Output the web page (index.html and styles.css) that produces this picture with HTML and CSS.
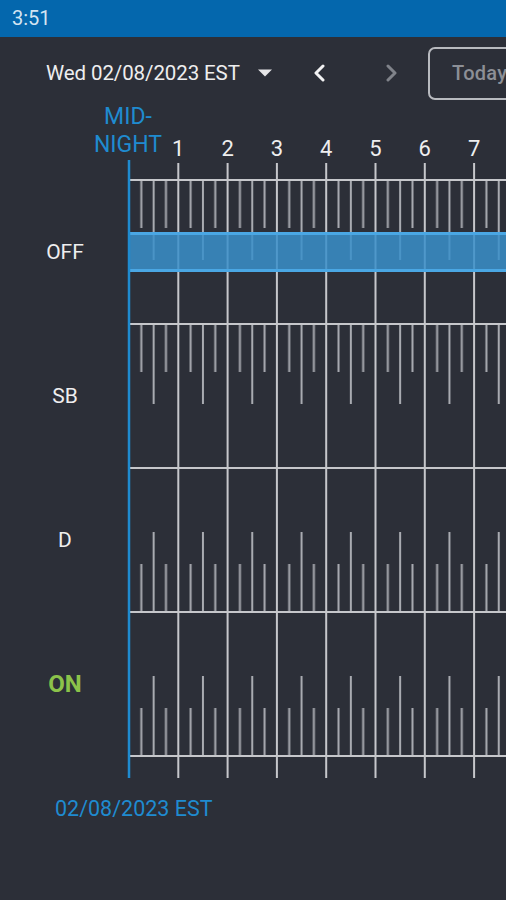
FILE: index.html
```html
<!DOCTYPE html>
<html lang="en">
<head>
  <meta charset="utf-8" />
  <meta name="viewport" content="width=device-width,initial-scale=1" />
  <title>Log – Wed 02/08/2023</title>
  <link rel="stylesheet" href="styles.css">
</head>
<body>
  <!-- status bar -->
  <div class="status">3:51</div>

  <!-- date picker / day navigation -->
  <header class="toolbar">
    <span class="date">Wed 02/08/2023 EST</span>
    <svg class="caret" width="16" height="8" viewBox="0 0 16 8"><path d="M1 0.5h14L8 7.5z"/></svg>
    <button class="nav" aria-label="Previous day">
      <svg width="12" height="18" viewBox="0 0 12 18"><polyline points="10,2 3,9 10,16"/></svg>
    </button>
    <button class="nav is-off" aria-label="Next day" disabled>
      <svg width="12" height="18" viewBox="0 0 12 18"><polyline points="2,2 9,9 2,16"/></svg>
    </button>
    <button class="today">Today</button>
  </header>

  <!-- duty status graph -->
  <section class="chart">
    <svg class="grid" width="506" height="690" viewBox="0 0 506 690">
      <defs>
        <pattern id="ticks-down" patternUnits="userSpaceOnUse" x="129" y="0" width="49.3" height="80">
          <path class="tick" d="M12.33 0v48M24.65 0v80M36.98 0v48"/>
        </pattern>
        <pattern id="ticks-up" patternUnits="userSpaceOnUse" x="129" y="0" width="49.3" height="80">
          <path class="tick" d="M12.33 80v-48M24.65 80v-80M36.98 80v-48"/>
        </pattern>
      </defs>

      <!-- quarter / half hour ticks -->
      <rect x="129" y="80" width="377" height="80" fill="url(#ticks-down)"/>
      <g transform="translate(0 224)"><rect x="129" y="0" width="377" height="80" fill="url(#ticks-down)"/></g>
      <g transform="translate(0 432)"><rect x="129" y="0" width="377" height="80" fill="url(#ticks-up)"/></g>
      <g transform="translate(0 576)"><rect x="129" y="0" width="377" height="80" fill="url(#ticks-up)"/></g>

      <!-- hour lines -->
      <path class="line" d="M178.3 63v615M227.6 63v615M276.9 63v615M326.2 63v615M375.5 63v615M424.8 63v615M474.1 63v615M523.4 63v615"/>

      <!-- row lines -->
      <path class="line" d="M129 80H506M129 224H506M129 368H506M129 512H506M129 656H506"/>

      <!-- OFF duty segment -->
      <rect class="seg" x="129" y="132" width="400" height="40"/>
      <path class="seg-edge" d="M129 133.5H506M129 170.5H506"/>

      <!-- midnight marker -->
      <path class="midnight" d="M129 60V678"/>

      <g class="axis">
        <text class="mid" x="128" y="24">MID-</text>
        <text class="mid" x="128" y="52">NIGHT</text>
        <text x="178.3" y="56">1</text>
        <text x="227.6" y="56">2</text>
        <text x="276.9" y="56">3</text>
        <text x="326.2" y="56">4</text>
        <text x="375.5" y="56">5</text>
        <text x="424.8" y="56">6</text>
        <text x="474.1" y="56">7</text>
      </g>
    </svg>

    <div class="label r1">OFF</div>
    <div class="label r2">SB</div>
    <div class="label r3">D</div>
    <div class="label r4 on">ON</div>
  </section>

  <footer class="foot">02/08/2023 EST</footer>
</body>
</html>
```

FILE: styles.css
```css
/* ── tokens ── */
:root{
  --c-bg:#2c2f38;
  --c-bar:#0467ad;
  --c-blue:#1f8bd0;
  --c-text:#eeeeef;
  --c-mute:#8c8f96;
  --c-line:#c6c7cb;
  --c-tick:#a9abb1;
  --c-on:#8bc34a;
}

*,*::before,*::after{box-sizing:border-box;margin:0;padding:0;}

body{
  background:var(--c-bg);
  color:var(--c-text);
  font-family:Roboto,"Noto Sans",sans-serif;
  width:506px;height:900px;
  overflow:hidden;
}

/* status bar */
.status{
  height:37px;line-height:37px;
  padding-left:12px;
  background:var(--c-bar);
  color:#d3e4f2;
  font-size:20px;
}

/* toolbar */
.toolbar{
  height:63px;
  padding:9px 0 0 46px;
  display:grid;
  grid-template-columns:211px 56px 73px 42px 120px;
  align-items:center;
  white-space:nowrap;
}
.date{font-size:20.5px;letter-spacing:-.1px;}
.caret{fill:#e6e6e8;}
.nav{
  background:none;border:0;
  display:flex;justify-self:start;
}
.nav polyline{fill:none;stroke:#f2f2f3;stroke-width:3;stroke-linecap:round;stroke-linejoin:round;}
.nav.is-off polyline{stroke:#80838a;}
.today{
  height:53px;width:120px;
  border:2px solid #b8babf;border-radius:7px;
  background:none;
  color:var(--c-mute);
  font:500 20px Roboto,sans-serif;
  text-align:left;padding-left:22px;
  letter-spacing:.3px;
}

/* chart */
.chart{
  display:grid;
  grid-template-columns:130px 1fr;
  grid-template-rows:80px repeat(4,144px) 34px;
}
.grid{grid-area:1/1/-1/-1;display:block;}
.tick{fill:none;stroke:var(--c-tick);stroke-width:2;}
.line{fill:none;stroke:var(--c-line);stroke-width:2;}
.seg{fill:#3a8fca;opacity:.85;}
.seg-edge{fill:none;stroke:#4aa7e4;stroke-width:3;}
.midnight{stroke:var(--c-blue);stroke-width:2.5;}
.axis text{
  fill:var(--c-text);
  font-size:22px;
  text-anchor:middle;
}
.axis .mid{fill:var(--c-blue);font-size:23px;}

.label{
  grid-column:1;
  display:flex;align-items:center;justify-content:center;
  font-size:21px;
}
.r1{grid-row:2;}
.r2{grid-row:3;}
.r3{grid-row:4;}
.r4{grid-row:5;}
.label.on{color:var(--c-on);font-weight:700;font-size:24px;}

/* footer date */
.foot{
  padding-left:55px;
  line-height:38px;
  font-size:21.5px;
  color:var(--c-blue);
}
```
